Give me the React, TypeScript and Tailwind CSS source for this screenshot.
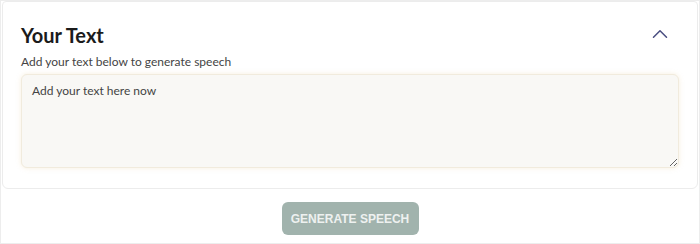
import React, { useState } from "react";
import { ChevronUp } from "lucide-react";

const App: React.FC = () => {
  const [open, setOpen] = useState(true);
  const [text, setText] = useState("");

  return (
    <div
      className="w-[700px] h-[244px] border border-[#ededed] px-px flex flex-col items-stretch bg-white"
      style={{ fontFamily: "Lato, 'Noto Sans', sans-serif" }}
    >
      <div className="border border-[#ececec] rounded-b-md rounded-t-sm px-[18px] pt-[19px] pb-5 bg-white">
        <div className="flex items-center justify-between h-7">
          <h2 className="text-[20px] leading-7 font-bold text-[#1b1b1b]">
            Your Text
          </h2>
          <button
            onClick={() => setOpen(!open)}
            className="mr-[6px] -mt-[3px] text-[#4b4f82]"
          >
            <ChevronUp size={26} strokeWidth={1.4} />
          </button>
        </div>
        {open && (
          <>
            <p className="mt-[3px] text-[12px] leading-5 text-[#444]">
              Add your text below to generate speech
            </p>
            <textarea
              value={text}
              onChange={(e) => setText(e.target.value)}
              placeholder="Add your text here now"
              className="mt-[2px] block w-full h-[94px] rounded-md border border-[#f1ebdd] bg-[#f9f8f5] px-[10px] pt-[6px] text-[12px] leading-5 text-[#333] placeholder:text-[#444] shadow-[0_0_5px_rgba(232,205,160,0.35)] outline-none"
            />
          </>
        )}
      </div>
      <div className="flex justify-center pt-[13px]">
        <button
          className="w-[137px] h-[33px] rounded-md bg-[#a1b3ad] text-[#eef1f0] text-[12px] font-bold uppercase"
          style={{ fontFamily: "'Liberation Sans', Arial, sans-serif" }}
        >
          Generate Speech
        </button>
      </div>
    </div>
  );
};

export default App;
